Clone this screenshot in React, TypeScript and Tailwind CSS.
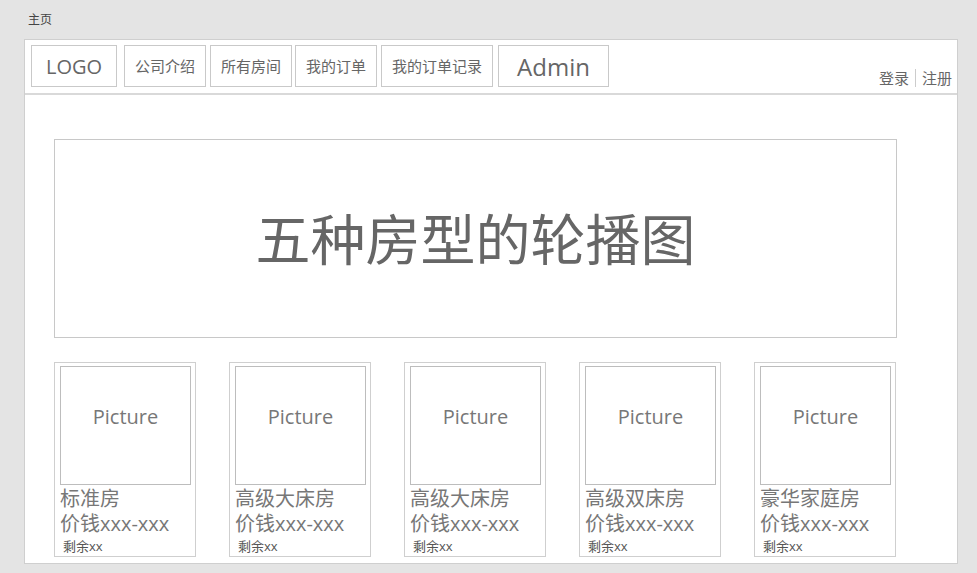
import React from "react";

const rooms = [
  { name: "标准房" },
  { name: "高级大床房" },
  { name: "高级大床房" },
  { name: "高级双床房" },
  { name: "豪华家庭房" },
];

const font = { fontFamily: '"Open Sans", "Noto Sans CJK SC", sans-serif' };

function NavBox({ label, cls }: { label: string; cls: string }) {
  return (
    <div
      className={`h-[42px] border border-[#c9c9c9] flex items-center justify-center text-[#666] ${cls}`}
    >
      {label}
    </div>
  );
}

export default function App() {
  return (
    <div className="w-[977px] h-[573px] bg-[#e4e4e4] overflow-hidden" style={font}>
      <div className="h-[39px] pl-[28px] pt-[10px] text-[12px] text-[#444] leading-[20px]">主页</div>
      <div className="ml-[24px] w-[934px] h-[525px] bg-white border border-[#cfcfcf]">
        {/* header */}
        <div className="h-[55px] border-b-2 border-[#d9d9d9] flex items-start pl-[6px] pt-[5px] pr-[5px]">
          <div className="flex">
            <NavBox label="LOGO" cls="w-[86px] text-[20px] pt-[2px]" />
            <NavBox label="公司介绍" cls="w-[82px] ml-[7px] text-[15px]" />
            <NavBox label="所有房间" cls="w-[82px] ml-[4px] text-[15px]" />
            <NavBox label="我的订单" cls="w-[82px] ml-[3px] text-[15px]" />
            <NavBox label="我的订单记录" cls="w-[112px] ml-[4px] text-[15px]" />
            <NavBox label="Admin" cls="w-[111px] ml-[5px] text-[24px] pt-[2px]" />
          </div>
          <div className="ml-auto mt-[23px] flex items-center text-[15px] text-[#666] leading-[20px]">
            <span>登录</span>
            <span className="mx-[6px] w-px h-[18px] bg-[#ccc]" />
            <span>注册</span>
          </div>
        </div>

        {/* carousel */}
        <div className="ml-[29px] mt-[44px] w-[843px] h-[199px] border border-[#c8c8c8] flex items-center justify-center">
          <span className="text-[55px] text-[#666] leading-none">五种房型的轮播图</span>
        </div>

        {/* rooms */}
        <div className="ml-[29px] mt-[24px] flex gap-[33px]">
          {rooms.map((r, i) => (
            <div key={i} className="w-[142px] h-[195px] border border-[#cfcfcf] px-[5px] pt-[3px]">
              <div className="w-[131px] h-[119px] border border-[#bdbdbd] flex items-center justify-center pb-[18px] text-[20px] text-[#777]">
                Picture
              </div>
              <div className="text-[20px] text-[#777] leading-[25px] mt-[1px]">{r.name}</div>
              <div className="text-[20px] text-[#777] leading-[25px]">价钱xxx-xxx</div>
              <div className="text-[13px] text-[#555] leading-[20px] pl-[3px]">剩余xx</div>
            </div>
          ))}
        </div>
      </div>
    </div>
  );
}
